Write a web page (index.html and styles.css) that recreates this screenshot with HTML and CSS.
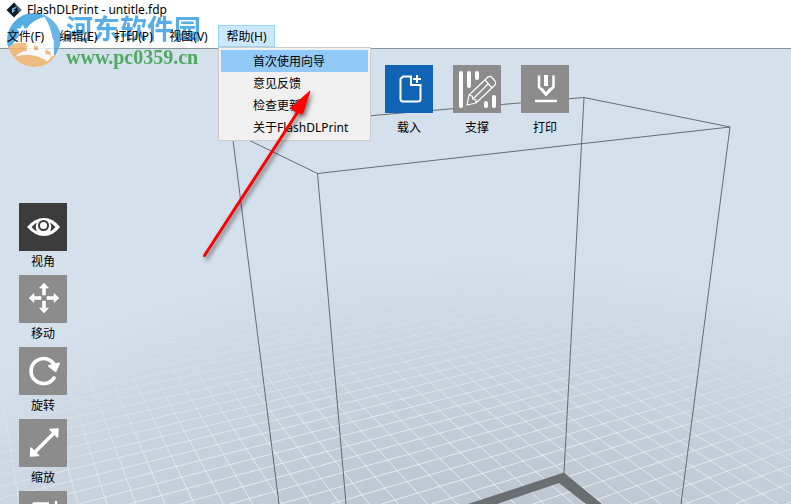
FILE: index.html
```html
<!DOCTYPE html>
<html lang="zh-CN">
<head>
<meta charset="utf-8">
<title>FlashDLPrint - untitle.fdp</title>
<link rel="stylesheet" href="styles.css">
</head>
<body>
<header class="window-head">
  <div class="title-bar">
    <svg class="app-icon" viewBox="0 0 16 16" aria-hidden="true">
      <path d="M8 0.500L15.500 8L8 15.500L0.500 8Z" fill="#14181f"/>
      <path d="M8 .5L15.500 8L13 10.500L10 4Z" fill="#4b6886"/>
      <path d="M6 11.500V6.500L10.500 4.500L9.500 6.500L7.500 7.500V8.500L9.500 8L8.500 9.500L7.500 10Z" fill="#79c5f5"/>
    </svg>
    <h1>FlashDLPrint - untitle.fdp</h1>
  </div>
  <nav class="menu-bar">
    <button type="button">文件(F)</button>
    <button type="button">编辑(E)</button>
    <button type="button">打印(P)</button>
    <button type="button">视图(V)</button>
    <div class="menu-holder">
      <button type="button" class="open" aria-expanded="true">帮助(H)</button>
      <div class="dropdown">
        <button type="button" class="current">首次使用向导</button>
        <button type="button">意见反馈</button>
        <button type="button">检查更新</button>
        <button type="button">关于FlashDLPrint</button>
      </div>
    </div>
  </nav>
  <div class="watermark">
    <svg class="mark-logo" viewBox="0 0 54 54" aria-hidden="true">
      <circle cx="27" cy="27" r="26" fill="#fff" fill-opacity=".75"/>
      <path d="M3 37A26 26 0 0 1 39 4Q25 7 19 17Q9 25 3 37Z" fill="#399fe0"/>
      <path d="M35 2Q49 8 53 21Q54 34 46 44Q47 17 35 2Z" fill="#52aae5"/>
      <path d="M2 34Q12 26 30 33Q41 37 48 42Q40 54 26 53Q8 51 2 34Z" fill="#f2b56d"/>
      <path d="M9 43Q21 31 44 43L40 48Q26 38 9 43Z" fill="#fff"/>
      <path d="M20 36V20L27 14V37H31V10L38 15V41H43V24L46 27V43L34 40L20 38Z" fill="#fff"/>
      <path d="M16 12L18 16L22 16L19 19L20 23L16 21L12 23L13 19L10 16L14 16Z" fill="#fff"/>
    </svg>
    <div class="mark-text">
      <span class="mark-name">河东软件园</span>
      <span class="mark-site">www.pc0359.cn</span>
    </div>
  </div>
</header>

<main class="workspace">
  <svg class="scene" viewBox="0 49 791 455" preserveAspectRatio="xMinYMin slice" aria-hidden="true">
    <defs>
      <radialGradient id="floor" gradientUnits="userSpaceOnUse" cx="0" cy="0" r="1" gradientTransform="translate(480 610) scale(660 355)">
        <stop offset="0" stop-color="#bac2cc"/>
        <stop offset=".4" stop-color="#bfc9d3"/>
        <stop offset=".7" stop-color="#c8d3de"/>
        <stop offset="1" stop-color="#d4e0ec"/>
      </radialGradient>
      <radialGradient id="fade" gradientUnits="userSpaceOnUse" cx="0" cy="0" r="1" gradientTransform="translate(450 620) scale(680 340)">
        <stop offset=".3" stop-color="#fff" stop-opacity=".7"/>
        <stop offset=".6" stop-color="#fff" stop-opacity=".5"/>
        <stop offset=".8" stop-color="#fff" stop-opacity=".2"/>
        <stop offset="1" stop-color="#fff" stop-opacity="0"/>
      </radialGradient>
    </defs>
    <rect y="49" width="791" height="455" fill="#d4e0ec"/>
    <rect y="49" width="791" height="455" fill="url(#floor)"/>
    <path id="grid" stroke="url(#fade)" fill="none"/>
    <path d="M468 504L564 472.500L602 504H586L559 483L497 504Z" fill="#5f6467" fill-opacity=".9"/>
    <path d="M232 132L317.500 173.500L730 127L584 97.500L232 127.500M232 132L279 504M317.500 173.500L346 504M584 97.500L564 473M730 127L681 504" fill="none" stroke="#4a4f52" stroke-width=".8"/>
  </svg>

  <div class="tools top-tools">
    <button type="button" class="tool primary"><span class="tile"><svg viewBox="0 0 48 48" fill="none" stroke="#fff">
      <path d="M26 11.500H18L15.500 14V34Q15.500 36.500 18 36.500H33Q35.500 36.500 35.500 34V20H26Z" stroke-width="2"/>
      <path d="M32 10V18M28 14H36" stroke-width="2"/></svg></span>载入</button>
    <button type="button" class="tool"><span class="tile"><svg viewBox="0 0 48 48" fill="none" stroke="#fff" stroke-linecap="round">
      <path d="M8 8V41M16 8V21M24 8V13M33 38V41M41 32V41" stroke-width="4"/>
      <path d="M14 40L16 30L35 12Q37 10.500 39 12.500L42 16Q43.500 18 42 20L23 38L14 40ZM16 30L19 31L20 34L23 35V38M32 15L39 23M35 19L20 34" stroke-width="1.200" stroke-linejoin="round"/></svg></span>支撑</button>
    <button type="button" class="tool"><span class="tile"><svg viewBox="0 0 48 48" fill="none" stroke="#fff">
      <path d="M18 10.500V22L25 29.500L32.500 22V10.500" stroke-width="2.500"/>
      <path d="M25 10V21" stroke-width="4"/>
      <path d="M18 22L22 24L25 28L28 24L32 22L25 31Z" fill="#fff" stroke-width="1"/>
      <path d="M14 36H36" stroke-width="2.500"/></svg></span>打印</button>
  </div>

  <div class="tools side-tools">
    <button type="button" class="tool active"><span class="tile"><svg viewBox="0 0 48 48">
      <path d="M8 24Q16 15 25 15Q34 15 41 24Q34 33 25 33Q16 33 8 24Z" fill="#fff"/>
      <path d="M12.500 24Q15 21 18 19.500Q15.500 24 18 28.500Q15 27 12.500 24ZM36.500 24Q34 21 31 19.500Q33.500 24 31 28.500Q34 27 36.500 24Z" fill="#3c3c3c"/>
      <circle cx="24.500" cy="22.500" r="4.500" fill="#fff" stroke="#3c3c3c" stroke-width="2"/></svg></span>视角</button>
    <button type="button" class="tool"><span class="tile"><svg viewBox="0 0 48 48" fill="#fff">
      <path d="M25 8L29.500 13H26.500V20H23.500V13H20.500ZM25 38L29.500 33H26.500V26H23.500V33H20.500ZM10 23L15 18.500V21.500H22V24.500H15V27.500ZM40 23L35 18.500V21.500H28V24.500H35V27.500Z" stroke="#fff" stroke-width=".6" stroke-linejoin="round"/></svg></span>移动</button>
    <button type="button" class="tool"><span class="tile"><svg viewBox="0 0 48 48" fill="none" stroke="#fff" stroke-linecap="round">
      <path d="M35 31A12.500 12.500 0 1 1 36 19" stroke-width="3.600"/>
      <path d="M30 19L40 16.500L36.500 24Z" fill="#fff" stroke-width="2" stroke-linejoin="round"/></svg></span>旋转</button>
    <button type="button" class="tool"><span class="tile"><svg viewBox="0 0 48 48" fill="#fff" stroke="#fff" stroke-linejoin="round">
      <path d="M15 34L36 13" stroke-width="3.500"/>
      <path d="M31 10.500L39 10L38.500 18ZM12 29L11.500 37L19.500 36.500Z" stroke-width="1.500"/></svg></span>缩放</button>
    <button type="button" class="tool"><span class="tile"><svg viewBox="0 0 48 48" fill="none" stroke="#fff">
      <path d="M30 12.500H15L12 16V37H34V19M37 10V17" stroke-width="2.500"/></svg></span></button>
  </div>
</main>

<svg class="pointer" viewBox="0 0 120 180" aria-hidden="true">
  <path d="M5.500 174.500L100 29" stroke="#f00" stroke-width="3" stroke-linecap="round"/>
  <path d="M111 10L91.500 27L97 31L103.500 33Z" fill="#f00" stroke="#f00"/>
</svg>
<script src="grid.js"></script>
</body>
</html>
```
FILE: styles.css
```css
* { box-sizing: border-box; }

body {
  margin: 0;
  height: 100vh;
  display: flex;
  flex-direction: column;
  overflow: hidden;
  position: relative;
  background: #d4e0ec;
  color: #000;
  font: 12px/16px "Noto Sans", "Noto Sans CJK SC", sans-serif;
}

button {
  margin: 0;
  padding: 0;
  border: 0;
  background: none;
  color: inherit;
  font: inherit;
}

.window-head {
  position: relative;
  z-index: 1;
  background: #fff;
  border-bottom: 1px solid #8b939b;
}

.title-bar {
  display: flex;
  align-items: center;
  gap: 5px;
  height: 20px;
  padding-left: 6px;
}

.title-bar h1 {
  margin: 0;
  font-size: 12px;
  font-weight: 400;
}

.app-icon { width: 16px; height: 16px; }

.menu-bar {
  display: flex;
  padding-top: 5px;
  height: 28px;
}

.menu-bar > button,
.menu-holder > button {
  height: 22px;
  width: 55px;
  padding-top: 2px;
  white-space: nowrap;
}

.menu-bar > button:first-child { width: 51px; }

.menu-holder {
  position: relative;
  margin-left: 2px;
}

.menu-holder > .open {
  width: 57px;
  background: #cce8ff;
  border: 1px solid #99d1ff;
}

.dropdown {
  position: absolute;
  top: 22px;
  left: 0;
  width: 153px;
  padding: 2px;
  display: flex;
  flex-direction: column;
  background: #f0f0f0;
  border: 1px solid #ccc;
}

.dropdown button {
  height: 22px;
  padding: 2px 0 0 32px;
  text-align: left;
  white-space: nowrap;
}

.dropdown .current { background: #91c9f7; }

.workspace {
  flex: 1;
  min-height: 0;
  position: relative;
  overflow: hidden;
}

.scene {
  position: absolute;
  inset: 0;
  width: 100%;
  height: 100%;
}

.tools {
  position: relative;
  display: flex;
}

.top-tools {
  gap: 20px;
  padding: 16px 0 0 385px;
}

.side-tools {
  flex-direction: column;
  align-items: flex-start;
  padding: 66px 0 0 19px;
}

.tool {
  width: 48px;
  height: 72px;
  display: flex;
  flex-direction: column;
  align-items: center;
  justify-content: flex-start;
  gap: 3px;
}

.top-tools .tool { gap: 7px; }

.tile {
  width: 48px;
  height: 48px;
  background: #8c8c8c;
}

.tile svg { display: block; }

.primary .tile { background: #1164b4; }

.active .tile { background: #3c3c3c; }

.watermark {
  position: absolute;
  z-index: -1;
  top: 12px;
  left: 6px;
  display: flex;
  gap: 4px;
  opacity: .85;
  pointer-events: none;
}

.mark-logo { width: 56px; height: 56px; }

.mark-text {
  display: flex;
  flex-direction: column;
  white-space: nowrap;
}

.mark-name {
  color: #3b9fe6;
  font: 700 27px/32px "Noto Sans CJK SC", sans-serif;
}

.mark-site {
  color: #38a047;
  font: 700 20px/26px "Liberation Serif", serif;
}

.pointer {
  position: absolute;
  z-index: 3;
  top: 81px;
  left: 199px;
  width: 120px;
  height: 180px;
  filter: drop-shadow(2px 3px 2px rgba(0, 0, 0, .5));
  pointer-events: none;
}
```
FILE: grid.js
```js
// Floor grid: two families of lines, each running to its own vanishing point.
const baseY = 504;
const horizonY = -40;
const topY = 270;

function family(vanishX, firstX, step, count) {
  let d = "";
  for (let i = 0; i < count; i++) {
    const x = firstX + i * step;
    const t = (baseY - topY) / (baseY - horizonY);
    const endX = x + (vanishX - x) * t;
    d += `M${x.toFixed(1)} ${baseY}L${endX.toFixed(1)} ${topY}`;
  }
  return d;
}

document.getElementById("grid").setAttribute(
  "d",
  family(-68, -39, 29.17, 75) + family(2180, -1992, 50.5, 56)
);
```
